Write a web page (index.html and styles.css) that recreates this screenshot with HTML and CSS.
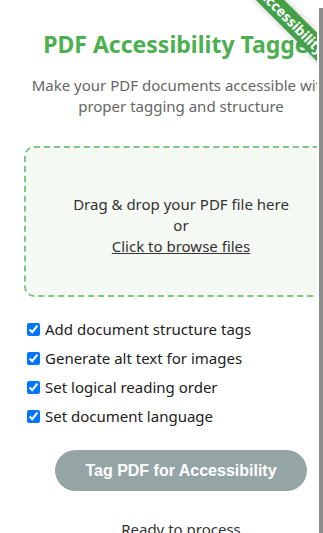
FILE: index.html
```html
<!DOCTYPE html>
<html lang="en">
<head>
    <meta charset="UTF-8">
    <meta name="viewport" content="width=device-width, initial-scale=1.0">
    <title>PDF Accessibility Tagger</title>
    <link rel="stylesheet" href="styles.css">
</head>
<body>

<div class="frame">
    <main class="viewport">
        <div class="container">
            <div class="ribbon">Accessibility</div>

            <h1>PDF Accessibility Tagger</h1>
            <p class="subtitle">Make your PDF documents accessible with proper tagging and structure</p>

            <!-- Upload area -->
            <div class="drop-zone" id="drop-zone">
                <p>Drag &amp; drop your PDF file here<br>or<br><label for="file-input" class="browse">Click to browse files</label></p>
                <input type="file" id="file-input" accept=".pdf" hidden>
            </div>

            <div class="options">
                <label class="option"><input type="checkbox" checked>Add document structure tags</label>
                <label class="option"><input type="checkbox" checked>Generate alt text for images</label>
                <label class="option"><input type="checkbox" checked>Set logical reading order</label>
                <label class="option"><input type="checkbox" checked>Set document language</label>
            </div>

            <div class="actions">
                <button class="tag-btn" disabled>Tag PDF for Accessibility</button>
            </div>

            <p class="status">Ready to process</p>
        </div>
    </main>
    <div class="scroll-thumb"></div>
</div>

</body>
</html>
```

FILE: styles.css
```css
body {
    margin: 0;
    background-color: #ffffff;
    font-family: "Segoe UI", "Noto Sans", sans-serif;
    color: #333333;
    overflow: hidden;
}
.frame {
    display: flex;
}
.viewport {
    width: 317px;
    flex: 0 0 317px;
    overflow: hidden;
}
.container {
    position: relative;
    width: 314px;
    padding: 28px 24px 0 24px;
}
.ribbon {
    position: absolute;
    left: 212px;
    top: 12px;
    width: 160px;
    height: 20px;
    line-height: 20px;
    background-color: #43a047;
    color: #ffffff;
    font-size: 14px;
    font-weight: bold;
    text-align: center;
    transform: rotate(45deg);
    box-shadow: 0 0 6px rgba(0, 0, 0, 0.25);
}
h1 {
    margin: 0;
    font-size: 23px;
    line-height: 32px;
    color: #4caf50; /* hijau */
    text-align: center;
    white-space: nowrap;
}
.subtitle {
    margin: 15px 0 0 0;
    font-size: 15px;
    line-height: 21px;
    color: #666666;
    text-align: center;
}
.drop-zone {
    margin-top: 29px;
    padding: 46px 10px 38px 10px;
    border: 2px dashed #81c784;
    border-radius: 10px;
    background-color: #f5f9f3;
    text-align: center;
}
.drop-zone p {
    margin: 0;
    font-size: 15px;
    line-height: 21px;
}
.browse {
    text-decoration: underline;
    cursor: pointer;
}
.options {
    margin-top: 22px;
}
.option {
    display: flex;
    align-items: center;
    font-size: 15px;
    line-height: 21px;
    color: #222222;
    margin-bottom: 8px;
}
.option input {
    margin: 0 5px 0 3px;
}
.actions {
    margin-top: 23px;
    text-align: center;
}
.tag-btn {
    width: 252px;
    height: 41px;
    border: none;
    border-radius: 21px;
    background-color: #95a5a6;
    color: #ffffff;
    font-family: "Liberation Sans", Arial, sans-serif;
    font-size: 16px;
    font-weight: bold;
}
.status {
    margin: 28px 0 0 0;
    font-size: 15px;
    line-height: 21px;
    text-align: center;
}
.scroll-thumb {
    width: 4px;
    height: 560px;
    margin: 8px 0 0 2px;
    background-color: #8c8c8c;
}
```
